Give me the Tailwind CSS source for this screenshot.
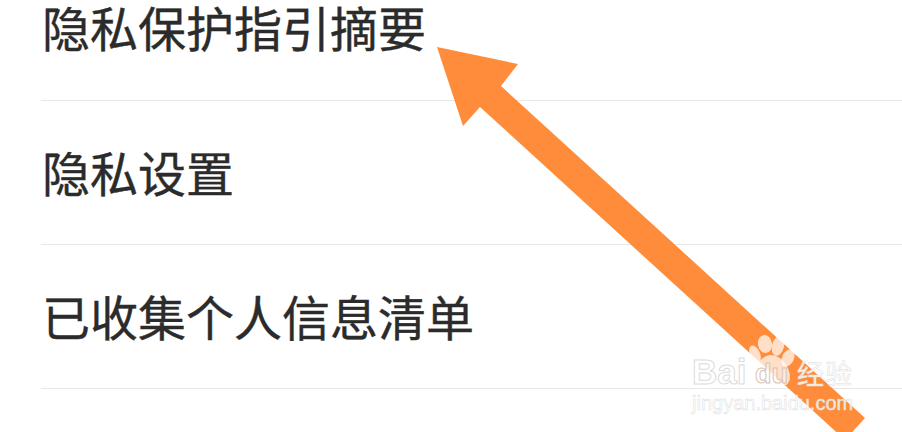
<!DOCTYPE html>
<html lang="zh">
<head>
<meta charset="utf-8">
<script src="https://cdn.jsdelivr.net/npm/@tailwindcss/browser@4"></script>
</head>
<body class="bg-white">
<div class="relative w-[902px] h-[432px] overflow-hidden bg-white font-['Noto_Sans_CJK_SC','Liberation_Sans',sans-serif] text-[#2b2b2b]">
  <div class="pl-[41px] mt-[-44px] flex flex-col">
    <div class="h-[145px] pb-[4px] border-b border-[#e8e8e8] flex items-center pl-[1px] text-[48px] leading-none [-webkit-text-stroke:0.4px_#2b2b2b]">隐私保护指引摘要</div>
    <div class="h-[144px] pb-[4px] border-b border-[#e8e8e8] flex items-center pl-[1px] text-[48px] leading-none [-webkit-text-stroke:0.4px_#2b2b2b]">隐私设置</div>
    <div class="h-[144px] pb-[4px] border-b border-[#e8e8e8] flex items-center pl-[1px] text-[48px] leading-none [-webkit-text-stroke:0.4px_#2b2b2b]">已收集个人信息清单</div>
  </div>
  <svg class="absolute left-0 top-0" width="902" height="432" viewBox="0 0 902 432">
    <polygon fill="#ff8c3b" points="437,47 518,64 501,86 865,418 845,440 480,107 463,126"/>
    <g fill="#fff" fill-opacity="0.72">
      <ellipse cx="755" cy="354" rx="5" ry="9" transform="rotate(-25 755 354)"/>
      <ellipse cx="765" cy="344" rx="7" ry="9" transform="rotate(-10 765 344)"/>
      <ellipse cx="778" cy="346" rx="6" ry="10" transform="rotate(15 778 346)"/>
      <ellipse cx="788" cy="358" rx="6" ry="9" transform="rotate(25 788 358)"/>
      <path d="M771 355c10 0 19 12 19 22c0 7-5 10-11 9c-5-1-11-1-16 0c-6 1-10-3-10-9c0-10 9-22 18-22z"/>
    </g>
  </svg>
  <div class="absolute left-[692px] top-[354px] font-['Liberation_Sans',sans-serif] font-bold text-[35px] leading-none text-white/80 [-webkit-text-stroke:1px_#dcdcdc]">Bai</div>
  <div class="absolute left-[755px] top-[361px] font-['Liberation_Sans',sans-serif] font-bold text-[27px] leading-none text-white/40 [-webkit-text-stroke:1px_#d8c4b6]">du</div>
  <div class="absolute left-[797px] top-[359px] text-[27px] leading-none tracking-[1px] text-white/85 [-webkit-text-stroke:0.5px_#dedede]">经验</div>
  <div class="absolute left-[692px] top-[393px] font-['Liberation_Sans',sans-serif] text-[20px] leading-none text-white/80 [-webkit-text-stroke:0.5px_#dcdcdc]">jingyan.baidu.com</div>
</div>
</body>
</html>
